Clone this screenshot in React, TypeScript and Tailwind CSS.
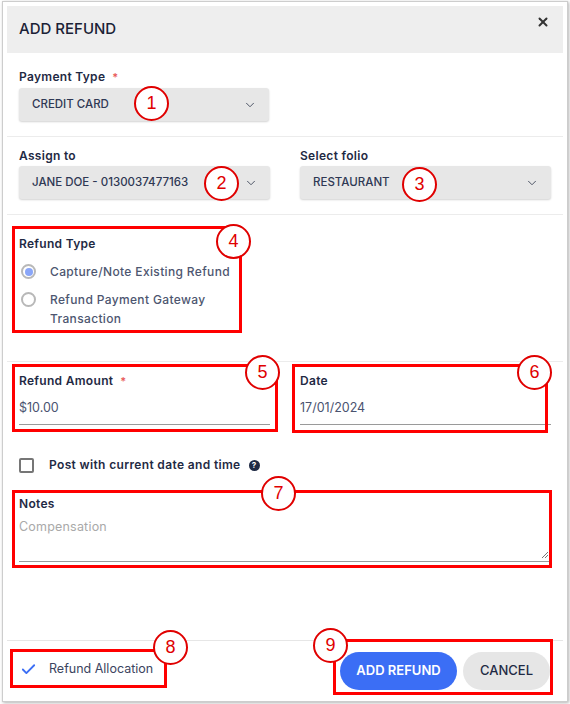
import React from "react";
import { X, ChevronDown, Check } from "lucide-react";

const font = { fontFamily: "Inter, 'Noto Sans', sans-serif" };

const Select = ({ value }: { value: string }) => (
  <div className="h-[33px] flex items-center justify-between pl-[13px] pr-[12px] bg-[#e7e7e7] rounded-[3px] shadow-[0_1px_2px_rgba(0,0,0,0.18)]">
    <span className="text-[11.5px] font-medium text-[#2f3854]">{value}</span>
    <ChevronDown size={14} strokeWidth={1.6} className="text-[#444b5e]" />
  </div>
);

const Label = ({ text, required }: { text: string; required?: boolean }) => (
  <div className="h-[16px] flex items-center text-[12px] font-semibold text-[#1f2a44] tracking-[0.3px]">
    {text}
    {required && <span className="ml-[7px] text-[#e85a5a] text-[11px]">*</span>}
  </div>
);

const Radio = ({ checked }: { checked?: boolean }) => (
  <span className="mt-[2px] w-[15px] h-[15px] rounded-full border-2 border-[#b8b8b8] flex items-center justify-center shrink-0 bg-white">
    {checked && <span className="w-[8px] h-[8px] rounded-full bg-[#8aa6f8]" />}
  </span>
);

const Circle = ({ n, x, y }: { n: number; x: number; y: number }) => (
  <div
    className="absolute w-[35px] h-[35px] -ml-[17px] -mt-[17px] rounded-full border-2 border-[#e00000] bg-white flex items-center justify-center text-[18px] text-[#e00000]"
    style={{ left: x, top: y, fontFamily: "'Liberation Sans', Arial, sans-serif" }}
  >
    {n}
  </div>
);

const Box = ({ x, y, w, h }: { x: number; y: number; w: number; h: number }) => (
  <div className="absolute border-[3px] border-[#ff0000]" style={{ left: x, top: y, width: w, height: h }} />
);

export default function App() {
  return (
    <div className="relative w-[570px] h-[704px] bg-white pl-[2px] pt-[1px] pr-[2px] pb-[2px]" style={font}>
      <div className="h-full border border-[#cdcdcd] shadow-[1px_1px_3px_rgba(0,0,0,0.3)] flex flex-col px-[4px] pt-[4px]">
        <div className="h-[47px] bg-[#eeeeee] flex items-start justify-between pl-[12px] pr-[13px]">
          <h1 className="mt-[12px] text-[15px] font-medium text-[#1b2236]">ADD REFUND</h1>
          <X size={14} strokeWidth={3.4} className="mt-[9px] text-[#333]" />
        </div>

        <div className="px-[12px] pt-[16px] pb-[15px] border-b border-[#ececec]">
          <Label text="Payment Type" required />
          <div className="mt-[3px] w-[250px]">
            <Select value="CREDIT CARD" />
          </div>
        </div>

        <div className="px-[12px] pt-[11px] pb-[15px] border-b border-[#ececec] grid grid-cols-2 gap-x-[30px]">
          <div>
            <Label text="Assign to" />
            <div className="mt-[2px]">
              <Select value="JANE DOE - 0130037477163" />
            </div>
          </div>
          <div>
            <Label text="Select folio" />
            <div className="mt-[2px]">
              <Select value="RESTAURANT" />
            </div>
          </div>
        </div>

        <div className="px-[12px] pt-[21px] pb-[33px] border-b border-[#ececec]">
          <Label text="Refund Type" />
          <div className="mt-[10px] flex flex-col gap-[9px] pl-[2px]">
            <div className="flex items-start gap-[14px]">
              <Radio checked />
              <span className="text-[12px] leading-[19px] font-medium text-[#4d5670] tracking-[0.35px]">Capture/Note Existing Refund</span>
            </div>
            <div className="flex items-start gap-[14px]">
              <Radio />
              <span className="text-[12px] leading-[19px] font-medium text-[#4d5670] tracking-[0.35px] w-[180px]">
                Refund Payment Gateway Transaction
              </span>
            </div>
          </div>
        </div>

        <div className="px-[12px] pt-[11px] grid grid-cols-2 gap-x-[30px]">
          <div>
            <Label text="Refund Amount" required />
            <div className="mt-[10px] pb-[7px] border-b border-[#9a9a9a] text-[12.5px] leading-[18px] text-[#4a5370]">$10.00</div>
          </div>
          <div>
            <Label text="Date" />
            <div className="mt-[10px] pb-[7px] border-b border-[#9a9a9a] text-[12.5px] leading-[18px] text-[#4a5370]">17/01/2024</div>
          </div>
        </div>

        <div className="px-[12px] mt-[31px] flex items-center">
          <span className="w-[15px] h-[15px] border-2 border-[#767676] rounded-[2px]" />
          <span className="ml-[15px] text-[12px] font-semibold text-[#1f2a44] tracking-[0.35px]">Post with current date and time</span>
          <span className="ml-[8px] w-[11px] h-[11px] rounded-full bg-[#1f2a44] text-white text-[8px] font-bold flex items-center justify-center">?</span>
        </div>

        <div className="px-[12px] mt-[22px]">
          <Label text="Notes" />
          <div className="relative mt-[6px] h-[44px] border-b border-[#9a9a9a] text-[12.5px] leading-[18px] text-[#a9a9a9] tracking-[0.2px]">
            Compensation
            <svg className="absolute right-[2px] bottom-[2px]" width="8" height="8" viewBox="0 0 8 8">
              <path d="M7 1L1 7M7 4L4 7" stroke="#777" strokeWidth="1" />
            </svg>
          </div>
        </div>

        <div className="flex-1" />

        <div className="border-t border-[#e6e6e6] h-[61px] flex items-center justify-between pl-[12px] pr-[13px]">
          <div className="flex items-center gap-[12px] pl-[1px] -mt-[4px]">
            <Check size={17} strokeWidth={2.6} className="text-[#3b6ef5]" />
            <span className="text-[12.5px] text-[#3b4460]">Refund Allocation</span>
          </div>
          <div className="flex items-center gap-[6px]">
            <button className="h-[38px] w-[117px] rounded-full bg-[#3b6ef5] text-white text-[13px] font-semibold">ADD REFUND</button>
            <button className="h-[38px] w-[87px] rounded-full bg-[#e6e6e6] text-[#1f2a44] text-[13px] font-medium">CANCEL</button>
          </div>
        </div>
      </div>

      <Box x={12} y={226} w={230} h={107} />
      <Box x={12} y={364} w={266} h={68} />
      <Box x={292} y={364} w={256} h={69} />
      <Box x={12} y={490} w={540} h={78} />
      <Box x={10} y={649} w={157} h={39} />
      <Box x={333} y={639} w={220} h={56} />

      <Circle n={1} x={151} y={103} />
      <Circle n={2} x={221} y={183} />
      <Circle n={3} x={419} y={184} />
      <Circle n={4} x={233} y={241} />
      <Circle n={5} x={262} y={372} />
      <Circle n={6} x={534} y={372} />
      <Circle n={7} x={278} y={493} />
      <Circle n={8} x={170} y={647} />
      <Circle n={9} x={330} y={645} />
    </div>
  );
}
